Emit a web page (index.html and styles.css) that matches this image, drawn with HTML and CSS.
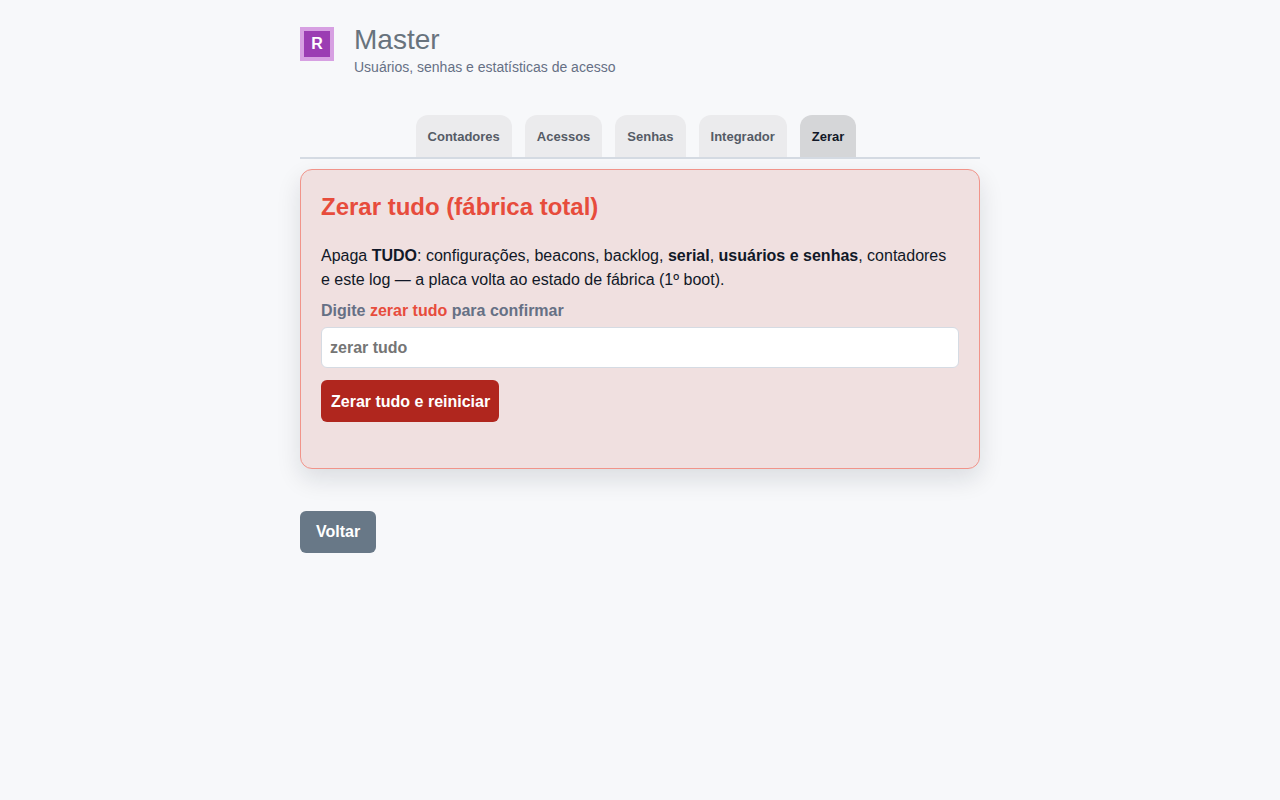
FILE: index.html
```html
<!DOCTYPE html>
<html lang="pt-BR">
<head>
  <title>Master</title>
  <meta charset="UTF-8">
  <meta name="viewport" content="width=device-width, initial-scale=1.0">
  <link rel="stylesheet" href="styles.css">
</head>
<body>
  <div class="container">
    <header class="header">
      <div class="logo">R</div>
      <div>
        <h1>Master</h1>
        <p class="subtitle">Usuários, senhas e estatísticas de acesso</p>
      </div>
    </header>

    <nav class="tabs">
      <button type="button" class="tab">Contadores</button>
      <button type="button" class="tab">Acessos</button>
      <button type="button" class="tab">Senhas</button>
      <button type="button" class="tab">Integrador</button>
      <button type="button" class="tab active">Zerar</button>
    </nav>

    <form class="card danger">
      <h2>Zerar tudo (fábrica total)</h2>
      <p>Apaga <b>TUDO</b>: configurações, beacons, backlog, <b>serial</b>, <b>usuários e senhas</b>, contadores e este log — a placa volta ao estado de fábrica (1º boot).</p>
      <label for="confirm">Digite <span>zerar tudo</span> para confirmar</label>
      <input type="text" id="confirm" placeholder="zerar tudo" autocomplete="off">
      <button type="submit" class="button button-danger">Zerar tudo e reiniciar</button>
    </form>

    <a href="#" class="button button-back">Voltar</a>
  </div>
</body>
</html>
```
FILE: styles.css
```css
* {
  box-sizing: border-box;
}
body {
  margin: 0;
  background-color: #f7f8fa;
  color: #111827;
  font-family: 'Liberation Sans', Arial, sans-serif;
  font-size: 16px;
  line-height: 24px;
}
.container {
  max-width: 720px;
  margin: 0 auto;
  padding: 24px 20px;
}
.header {
  display: flex;
  align-items: flex-start;
  gap: 20px;
}
.logo {
  width: 34px;
  height: 34px;
  margin-top: 3px;
  border: 4px solid #d7a0e2;
  background-color: #9b3db3;
  color: #fff;
  font-weight: bold;
  line-height: 26px;
  text-align: center;
}
h1 {
  margin: 0;
  color: #68737d;
  font-size: 28px;
  font-weight: normal;
  line-height: 32px;
}
.subtitle {
  margin: 0;
  color: #667085;
  font-size: 14px;
  line-height: 22px;
}
.tabs {
  display: flex;
  justify-content: center;
  gap: 13px;
  margin-top: 37px;
  padding-right: 8px;
  border-bottom: 2px solid #d5dbe3;
}
.tab {
  height: 42px;
  padding: 0 12px;
  border: none;
  border-radius: 12px 12px 0 0;
  background-color: #ebebed;
  color: #555b66;
  font-family: inherit;
  font-size: 13px;
  font-weight: bold;
  cursor: pointer;
}
.tab.active {
  background-color: #d5d6d8;
  color: #111827;
}
.card {
  margin-top: 10px;
  padding: 20px 20px 46px;
  border: 1px solid #d5dbe3;
  border-radius: 12px;
  box-shadow: 0 10px 24px rgba(17, 24, 39, 0.12);
}
.danger {
  border-color: #f1948a;
  background-color: #f0e0e0;
}
h2 {
  margin: 0 0 20px;
  color: #e74c3c;
  font-size: 24px;
  line-height: 34px;
}
.card p {
  margin: 0;
}
label {
  display: block;
  margin: 7px 0 4px;
  color: #667085;
  font-weight: bold;
}
label span {
  color: #e74c3c;
}
input {
  display: block;
  width: 100%;
  height: 41px;
  padding: 0 8px;
  border: 1px solid #d5dbe3;
  border-radius: 6px;
  background-color: #fff;
  color: #111827;
  font-family: inherit;
  font-size: 16px;
  font-weight: bold;
}
.button {
  display: inline-block;
  height: 42px;
  border: none;
  border-radius: 6px;
  color: #fff;
  font-family: inherit;
  font-size: 16px;
  font-weight: bold;
  line-height: 42px;
  text-decoration: none;
  cursor: pointer;
}
.button-danger {
  display: block;
  margin-top: 12px;
  padding: 1px 9px 0 10px;
  background-color: #b0261e;
}
.button-back {
  margin-top: 42px;
  padding: 0 16px;
  background-color: #687887;
}
```
